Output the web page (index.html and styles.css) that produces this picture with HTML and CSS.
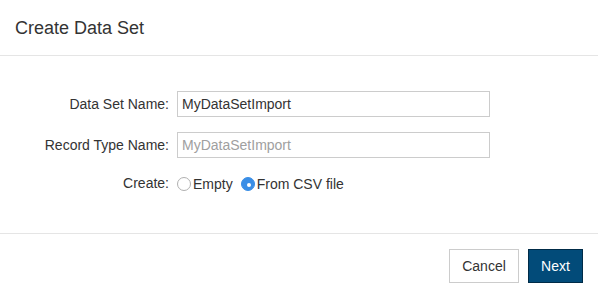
FILE: index.html
```html
<!DOCTYPE html>
<html>
<head>
<meta charset="utf-8">
<link rel="stylesheet" href="styles.css">
</head>
<body>
<div class="dialog">
  <div class="header"><h1 class="title">Create Data Set</h1></div>
  <div class="content">
    <div class="form">
      <label class="label">Data Set Name:</label>
      <div class="input">MyDataSetImport</div>
      <label class="label">Record Type Name:</label>
      <div class="input placeholder">MyDataSetImport</div>
      <label class="label radio-label">Create:</label>
      <div class="radios">
        <span class="radio"></span><span class="radio-text">Empty</span>
        <span class="radio checked"></span><span class="radio-text">From CSV file</span>
      </div>
    </div>
  </div>
  <div class="footer">
    <button class="btn cancel">Cancel</button>
    <button class="btn next">Next</button>
  </div>
</div>
</body>
</html>
```

FILE: styles.css
```css
html, body {
  margin: 0;
  padding: 0;
  background: #fff;
}
body {
  font-family: "Liberation Sans", Arial, sans-serif;
  font-size: 14px;
  color: #333;
}
.dialog {
  width: 598px;
  height: 298px;
  display: flex;
  flex-direction: column;
}
.header {
  height: 55px;
  border-bottom: 1px solid #e5e5e5;
  display: flex;
  align-items: center;
  padding-left: 15px;
}
.title {
  margin: 0;
  font-size: 18px;
  font-weight: normal;
  color: #333;
  line-height: 20px;
}
.content {
  padding: 35px 0 40px 0;
  border-bottom: 1px solid #e5e5e5;
}
.form {
  display: grid;
  grid-template-columns: 169px 313px;
  grid-template-rows: 26px 26px 20px;
  column-gap: 8px;
  row-gap: 15px;
}
.label {
  text-align: right;
  display: flex;
  align-items: center;
  justify-content: flex-end;
}
.input {
  box-sizing: border-box;
  height: 26px;
  border: 1px solid #cccccc;
  padding: 0 4px;
  display: flex;
  align-items: center;
  color: #333;
}
.input.placeholder {
  color: #a0a0a0;
}
.radios {
  display: flex;
  align-items: center;
  padding-top: 1px;
}
.radio {
  box-sizing: border-box;
  width: 14px;
  height: 14px;
  border-radius: 50%;
  border: 1px solid #b0b0b0;
  background: #fff;
  margin-right: 2px;
  position: relative;
}
.radio.checked {
  border-color: #3a8ee6;
  background: #3a8ee6;
}
.radio.checked::after {
  content: "";
  position: absolute;
  left: 5px;
  top: 5px;
  width: 4px;
  height: 4px;
  border-radius: 50%;
  background: #fff;
}
.radio-text {
  margin-right: 8px;
}
.footer {
  flex: 1;
  display: flex;
  justify-content: flex-end;
  align-items: flex-start;
  padding: 15px 15px 0 0;
  gap: 9px;
}
.btn {
  box-sizing: border-box;
  height: 34px;
  font-family: "Liberation Sans", Arial, sans-serif;
  font-size: 14px;
  padding: 0;
  cursor: pointer;
}
.cancel {
  width: 70px;
  background: #fff;
  border: 1px solid #cccccc;
  color: #333;
}
.next {
  width: 55px;
  background: #024b79;
  border: 1px solid #002b47;
  color: #fff;
}
```
